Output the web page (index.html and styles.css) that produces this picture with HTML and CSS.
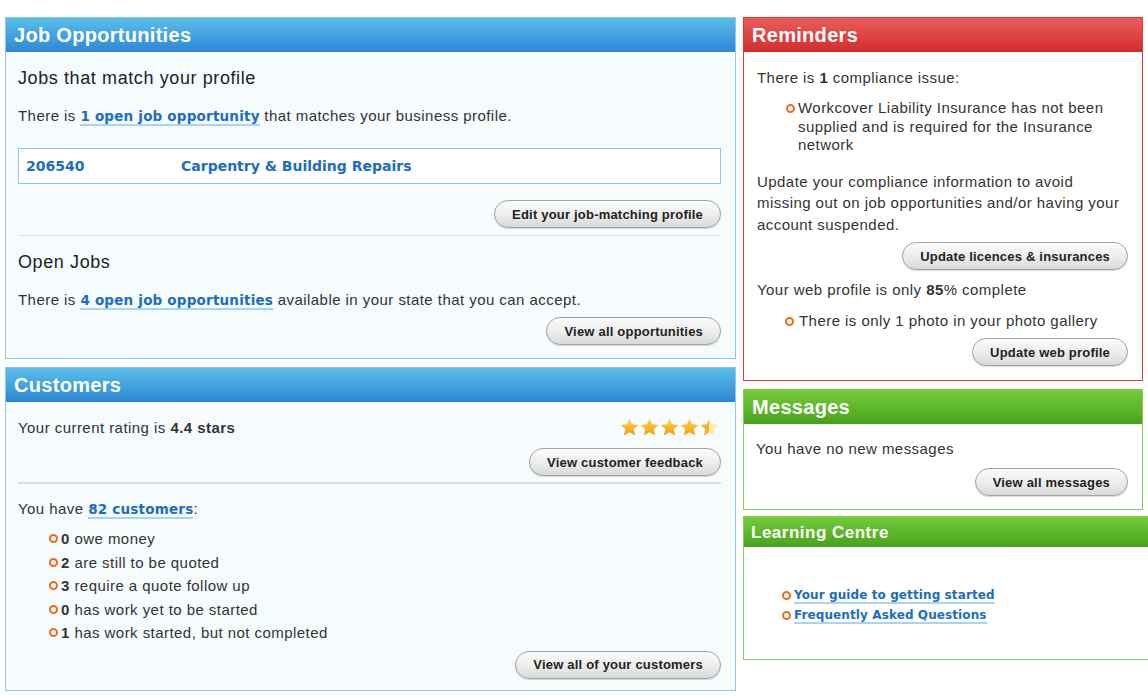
FILE: index.html
```html
<!DOCTYPE html>
<html lang="en">
<head>
    <meta charset="UTF-8">
    <title>Dashboard</title>
    <link rel="stylesheet" href="styles.css">
</head>
<body>

<div class="page">

    <!-- Columna izquierda -->
    <div class="col-main">

        <div class="panel panel-blue jobs">
            <div class="panel-head">Job Opportunities</div>
            <div class="panel-body">
                <h3>Jobs that match your profile</h3>
                <p>There is <a href="#">1 open job opportunity</a> that matches your business profile.</p>
                <div class="job-row">
                    <span class="job-id">206540</span>
                    <span class="job-name">Carpentry &amp; Building Repairs</span>
                </div>
                <div class="actions"><button class="btn btn-edit">Edit your job-matching profile</button></div>
                <hr class="divider">
                <h3>Open Jobs</h3>
                <p>There is <a href="#">4 open job opportunities</a> available in your state that you can accept.</p>
                <div class="actions"><button class="btn btn-opps">View all opportunities</button></div>
            </div>
        </div>

        <div class="panel panel-blue customers">
            <div class="panel-head">Customers</div>
            <div class="panel-body">
                <div class="rating">
                    <p>Your current rating is <b>4.4 stars</b></p>
                    <svg class="stars" width="100" height="19" viewBox="0 0 100 19">
                        <defs>
                            <linearGradient id="gold" x1="0" y1="0" x2="0" y2="1">
                                <stop offset="0" stop-color="#ffd84a"/>
                                <stop offset="1" stop-color="#f39a0c"/>
                            </linearGradient>
                            <linearGradient id="half" x1="0" y1="0" x2="1" y2="0">
                                <stop offset="0.45" stop-color="#f8b21e"/>
                                <stop offset="0.45" stop-color="#fde7a6"/>
                            </linearGradient>
                            <path id="star" d="M9.5 0.5 L12.1 6.3 L18.5 6.9 L13.7 11.1 L15.1 17.5 L9.5 14.2 L3.9 17.5 L5.3 11.1 L0.5 6.9 L6.9 6.3 Z"/>
                        </defs>
                        <use href="#star" x="0" fill="url(#gold)"/>
                        <use href="#star" x="20" fill="url(#gold)"/>
                        <use href="#star" x="40" fill="url(#gold)"/>
                        <use href="#star" x="60" fill="url(#gold)"/>
                        <use href="#star" x="80" fill="url(#half)"/>
                    </svg>
                </div>
                <div class="actions"><button class="btn btn-feedback">View customer feedback</button></div>
                <hr class="divider thick">
                <p>You have <a href="#">82 customers</a>:</p>
                <ul class="dots counts">
                    <li><b>0</b> owe money</li>
                    <li><b>2</b> are still to be quoted</li>
                    <li><b>3</b> require a quote follow up</li>
                    <li><b>0</b> has work yet to be started</li>
                    <li><b>1</b> has work started, but not completed</li>
                </ul>
                <div class="actions"><button class="btn btn-all">View all of your customers</button></div>
            </div>
        </div>

    </div>

    <!-- Columna derecha -->
    <div class="col-side">

        <div class="panel panel-red reminders">
            <div class="panel-head">Reminders</div>
            <div class="panel-body">
                <p>There is <b>1</b> compliance issue:</p>
                <ul class="dots issue">
                    <li>Workcover Liability Insurance has not been supplied and is required for the Insurance network</li>
                </ul>
                <p class="update-text">Update your compliance information to avoid missing out on job opportunities and/or having your account suspended.</p>
                <div class="actions"><button class="btn btn-licences">Update licences &amp; insurances</button></div>
                <p class="profile-text">Your web profile is only <b>85</b>% complete</p>
                <ul class="dots photo">
                    <li>There is only 1 photo in your photo gallery</li>
                </ul>
                <div class="actions"><button class="btn btn-web">Update web profile</button></div>
            </div>
        </div>

        <div class="panel panel-green messages">
            <div class="panel-head">Messages</div>
            <div class="panel-body">
                <p>You have no new messages</p>
                <div class="actions"><button class="btn btn-msgs">View all messages</button></div>
            </div>
        </div>

        <div class="panel panel-green learning">
            <div class="panel-head">Learning Centre</div>
            <div class="panel-body">
                <ul class="dots guides">
                    <li><a href="#">Your guide to getting started</a></li>
                    <li><a href="#">Frequently Asked Questions</a></li>
                </ul>
            </div>
        </div>

    </div>

</div>

</body>
</html>
```

FILE: styles.css
```css
body {
    margin: 0;
    padding: 0;
    background-color: #ffffff;
    font-family: "Liberation Sans", Arial, sans-serif;
    font-size: 15px;
    letter-spacing: 0.45px;
    color: #333;
    overflow: hidden;
}
.page {
    display: flex;
    gap: 7px;
    padding: 17px 0 0 5px;
}
.col-main {
    width: 731px;
    display: flex;
    flex-direction: column;
    gap: 8px;
}
.col-side {
    width: 400px;
    display: flex;
    flex-direction: column;
}

/* Paneles */
.panel {
    border: 1px solid #8ec6ec;
    background-color: #f6fbfe;
}
.panel-head {
    height: 34px;
    line-height: 35px;
    padding-left: 8px;
    color: #fff;
    font-size: 20px;
    font-weight: bold;
    letter-spacing: 0.3px;
    background: linear-gradient(#5bbfea, #3a98dc 70%, #2f86d3);
}
.panel-body {
    padding: 0 14px 0 12px;
}
.panel-red {
    border-color: #dc3a3a;
    background-color: #fff;
}
.panel-red .panel-head {
    background: linear-gradient(#ea5d5d, #dc3a3a 70%, #d12b2b);
}
.panel-green {
    border-color: #88cc55;
    background-color: #fff;
}
.panel-green .panel-head {
    background: linear-gradient(#73cc3a, #56b026 70%, #46a11b);
}

p {
    margin: 0;
}
h3 {
    margin: 0;
    font-size: 18px;
    font-weight: normal;
    letter-spacing: 0.6px;
    color: #222;
}
a {
    color: #1a6dc0;
    font-family: "DejaVu Sans", Verdana, sans-serif;
    font-size: 13.5px;
    font-weight: bold;
    letter-spacing: 0.2px;
    text-decoration: none;
    border-bottom: 2px solid #a8d4f4;
}

/* Botones */
.actions {
    text-align: right;
}
.btn {
    height: 28px;
    padding: 0 17px;
    border: 1px solid #a3a3a3;
    border-radius: 14px;
    background: linear-gradient(#fbfbfb, #ececec 55%, #d9d9d9);
    box-shadow: 0 1px 1px rgba(0, 0, 0, 0.15);
    font-family: "Liberation Sans", Arial, sans-serif;
    font-size: 13px;
    font-weight: bold;
    letter-spacing: 0.2px;
    color: #222;
    cursor: pointer;
}

.divider {
    border: none;
    border-top: 1px solid #dde2e6;
    margin: 0;
}
.divider.thick {
    border-top: 2px solid #dcdcdc;
}

/* Listas con punto naranja */
.dots {
    list-style: none;
    margin: 0;
    padding: 0;
}
.dots li {
    position: relative;
    padding-left: 12px;
}
.dots li:before {
    content: '';
    position: absolute;
    left: 0;
    top: 5px;
    width: 5px;
    height: 5px;
    border: 2px solid #f26a1b;
    border-radius: 50%;
}

/* Job Opportunities */
.jobs h3 {
    margin-top: 16px;
}
.jobs p {
    margin-top: 17px;
}
.jobs h3 + p {
    margin-top: 18px;
}
.job-row {
    margin-top: 24px;
    height: 34px;
    display: flex;
    align-items: center;
    border: 1px solid #8ec6ec;
    background-color: #fff;
    padding-left: 7px;
    color: #1a6dc0;
    font-family: "DejaVu Sans", Verdana, sans-serif;
    font-size: 14px;
    font-weight: bold;
    letter-spacing: 0;
}
.job-id {
    width: 155px;
}
.btn-edit {
    margin-top: 16px;
}
.jobs .divider {
    margin-top: 7px;
}
.jobs .btn-opps {
    margin-top: 9px;
    margin-bottom: 13px;
}

/* Customers */
.rating {
    display: flex;
    justify-content: space-between;
    align-items: center;
    margin-top: 16px;
}
.stars {
    margin-right: 1px;
}
.btn-feedback {
    margin-top: 11px;
}
.customers .divider {
    margin-top: 6px;
}
.customers .divider + p {
    margin-top: 16px;
}
.counts {
    margin: 10px 0 0 31px;
}
.counts li {
    line-height: 23.5px;
    padding-left: 12px;
}
.counts li:before {
    top: 7px;
}
.btn-all {
    margin-top: 6px;
    margin-bottom: 11px;
}

/* Reminders */
.reminders .panel-body {
    padding-left: 13px;
}
.reminders p:first-child {
    margin-top: 17px;
}
.issue {
    margin: 13px 0 0 29px;
    line-height: 18.5px;
}
.update-text {
    margin-top: 16px;
    line-height: 21.5px;
}
.btn-licences {
    margin-top: 7px;
}
.profile-text {
    margin-top: 11px;
}
.photo {
    margin: 14px 0 0 28px;
}
.photo li {
    padding-left: 14px;
}
.btn-web {
    margin-top: 9px;
    margin-bottom: 14px;
}

/* Messages */
.messages {
    margin-top: 8px;
}
.messages p {
    margin-top: 16px;
}
.btn-msgs {
    margin-top: 11px;
    margin-bottom: 13px;
}

/* Learning Centre */
.learning {
    margin-top: 6px;
    margin-right: -12px;
}
.learning .panel-head {
    height: 30px;
    line-height: 31px;
    font-size: 17px;
    letter-spacing: 0.5px;
    padding-left: 7px;
}
.guides {
    margin: 38px 0 0 26px;
    padding-bottom: 34px;
    font-family: "DejaVu Sans", Verdana, sans-serif;
    font-size: 12px;
}
.guides li {
    padding-left: 12px;
    line-height: 20px;
}
.guides li:before {
    top: 6px;
}
.guides a {
    font-size: 12px;
    letter-spacing: 0.1px;
    border-bottom-width: 2px;
}
```
